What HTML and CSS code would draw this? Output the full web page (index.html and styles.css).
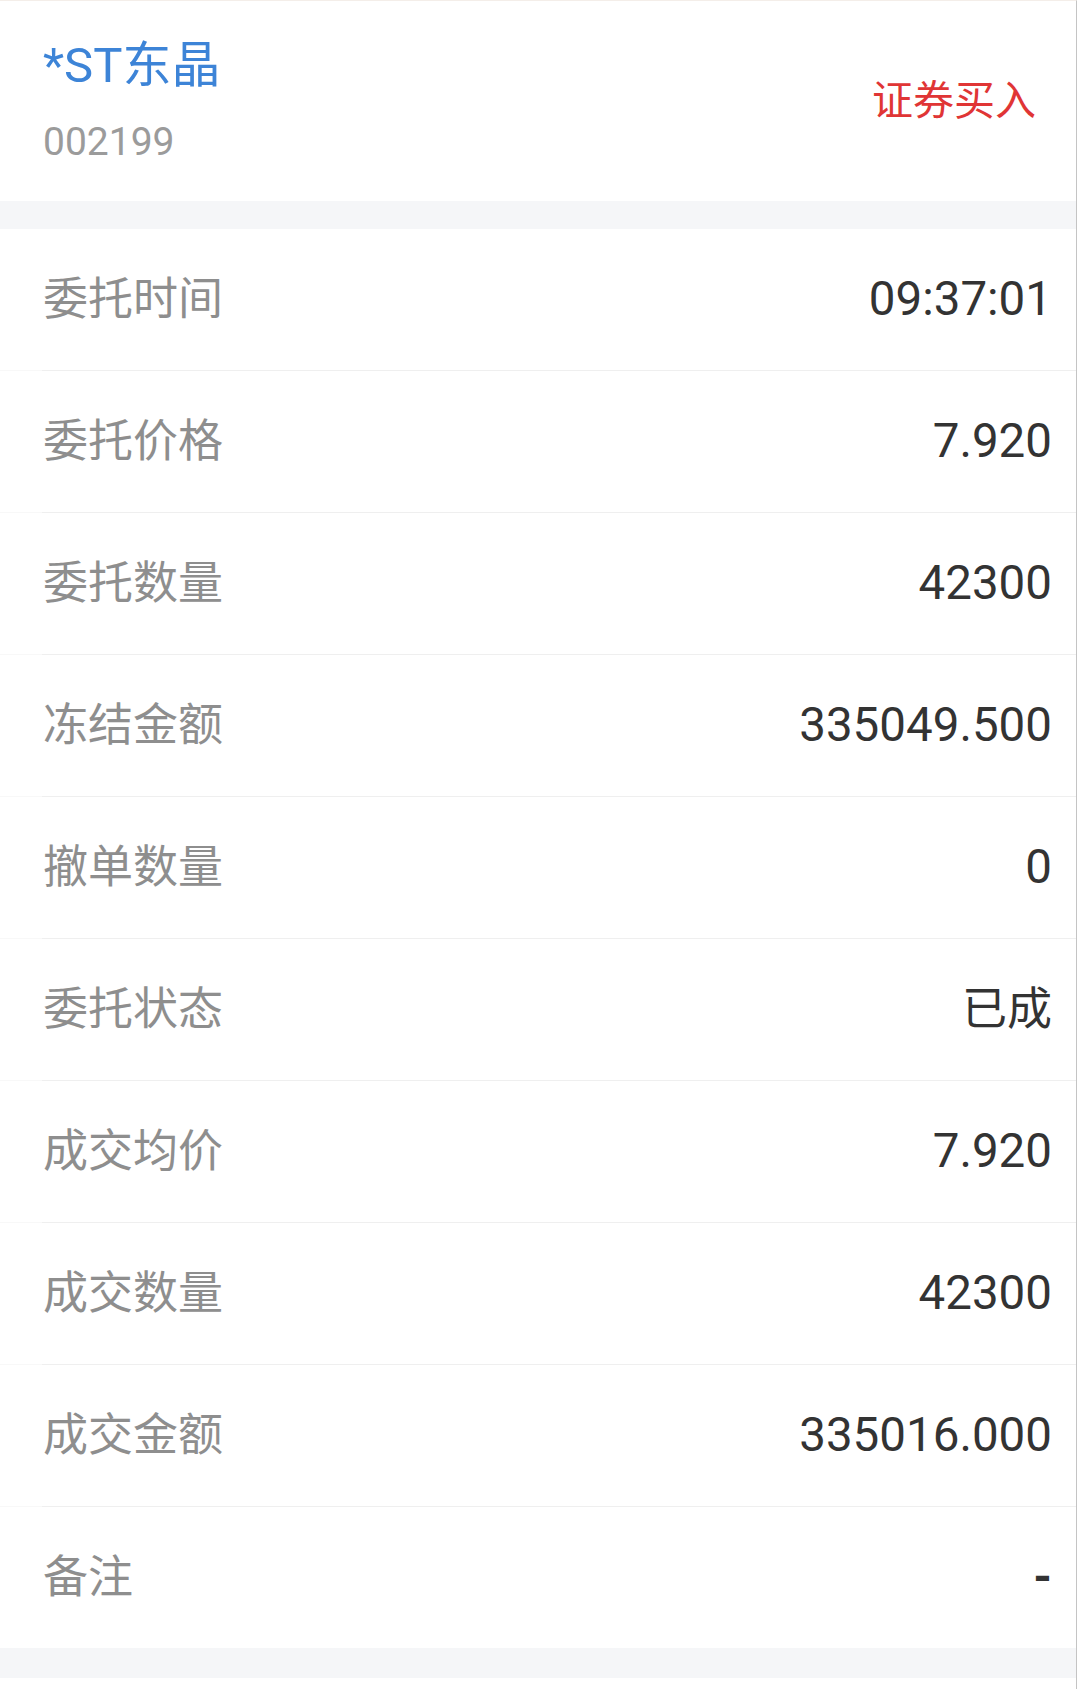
FILE: index.html
```html
<html lang="zh-CN">
<head>
<meta http-equiv="Content-Type" content="text/html; charset=utf-8"/>
<title>委托详情</title>
<link rel="stylesheet" href="styles.css">
</head>
<body>
<div class="page">

<div class="head">
    <div class="stock">
        <div class="stock-name">*ST东晶</div>
        <div class="stock-code">002199</div>
    </div>
    <div class="trade-type">证券买入</div>
</div>

<div class="gap"></div>

<div class="list">
    <div class="row"><span class="label">委托时间</span><span class="value">09:37:01</span></div>
    <div class="row"><span class="label">委托价格</span><span class="value">7.920</span></div>
    <div class="row"><span class="label">委托数量</span><span class="value">42300</span></div>
    <div class="row"><span class="label">冻结金额</span><span class="value">335049.500</span></div>
    <div class="row"><span class="label">撤单数量</span><span class="value">0</span></div>
    <div class="row"><span class="label">委托状态</span><span class="value cn">已成</span></div>
    <div class="row"><span class="label">成交均价</span><span class="value">7.920</span></div>
    <div class="row"><span class="label">成交数量</span><span class="value">42300</span></div>
    <div class="row"><span class="label">成交金额</span><span class="value">335016.000</span></div>
    <div class="row last"><span class="label">备注</span><span class="value dash">-</span></div>
</div>

<div class="gap bottom"></div>

</div>
</body>
</html>
```

FILE: styles.css
```css
html {
    background-color: #ffffff;
}
body {
    margin: 0;
    font-family: Roboto, "Noto Sans CJK SC", sans-serif;
}
.page {
    width: 1077px;
    min-height: 1689px;
    box-sizing: border-box;
    border-right: 1px solid #c4c4c4;
    border-top: 1px solid #f4eee9;
    background-color: #ffffff;
}

/* header */
.head {
    height: 200px;
    box-sizing: border-box;
    padding: 37px 40px 0 43px;
    display: flex;
    justify-content: space-between;
}
.stock-name {
    font-size: 49px;
    line-height: 56px;
    color: #3d84d7;
}
.stock-code {
    margin-top: 25px;
    font-size: 39px;
    line-height: 46px;
    color: #9b9b9b;
}
.trade-type {
    align-self: center;
    margin-top: -37px;
    font-size: 41px;
    line-height: 48px;
    color: #e03535;
}

.gap {
    height: 28px;
    background-color: #f5f6f8;
}
.gap.bottom {
    height: 30px;
}

/* detail rows */
.row {
    height: 142px;
    box-sizing: border-box;
    display: flex;
    align-items: center;
    justify-content: space-between;
    padding: 0 24px 1px 43px;
    background: linear-gradient(to right, #f8f8f8 42px, #efefef 42px) left bottom / 100% 1px no-repeat;
}
.row.last {
    height: 141px;
    padding-bottom: 0;
    background: none;
}
.label {
    font-size: 45px;
    line-height: 1;
    color: #8e8e8e;
}
.value {
    font-size: 47.5px;
    line-height: 1;
    color: #333333;
}
.value.cn {
    font-size: 45px;
}
.value.dash {
    font-weight: bold;
}
```
